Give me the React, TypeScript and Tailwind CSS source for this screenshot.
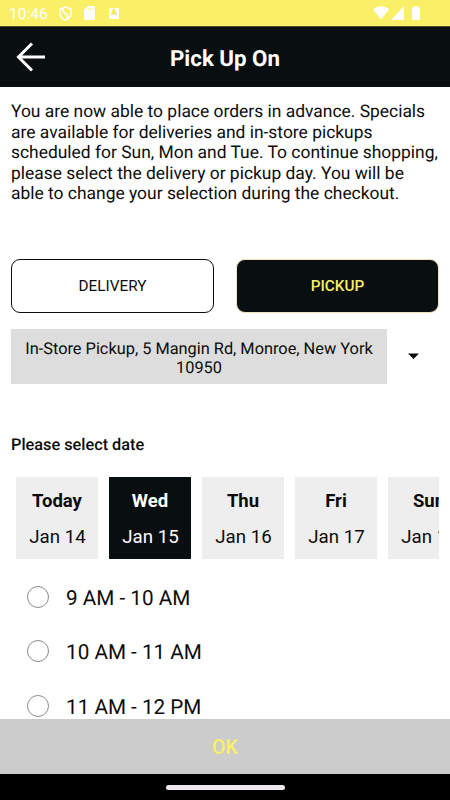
import { useState } from "react";

const dates = [
  { day: "Today", date: "Jan 14" },
  { day: "Wed", date: "Jan 15" },
  { day: "Thu", date: "Jan 16" },
  { day: "Fri", date: "Jan 17" },
  { day: "Sun", date: "Jan 19" },
];

const slots = ["9 AM - 10 AM", "10 AM - 11 AM", "11 AM - 12 PM"];

function StatusBar() {
  return (
    <div className="flex h-[26px] shrink-0 items-center bg-[#faf068] pl-[9px] pr-[30px] text-white">
      <span className="w-[50px] whitespace-nowrap pt-[2px] text-[15.500px] leading-[26px]">
        10:46
      </span>
      <svg className="h-[15px] w-[13px]" viewBox="0 0 13 15" fill="none" stroke="currentColor">
        <path d="M6.500 1 12 3v4.200c0 3.200-2.200 5.700-5.500 6.800C3.200 12.900 1 10.400 1 7.200V3z" strokeWidth="1.500" />
        <path d="M4 2.200C3.400 5 4.500 6.300 6.500 7.500S9 10.500 8.300 12.800" strokeWidth="1.700" />
      </svg>
      <svg className="ml-3 h-[14px] w-[11px]" viewBox="0 0 11 14">
        <path d="M4 0h6a1 1 0 0 1 1 1v12a1 1 0 0 1-1 1H1a1 1 0 0 1-1-1V4z" fill="currentColor" />
        <path d="M4.700 2v2M6.700 2v2M8.700 2v2" stroke="#faf068" strokeWidth="0.800" />
      </svg>
      <span className="ml-[14px] flex h-[11px] w-[10px] items-center justify-center rounded-[1px] bg-white text-[9px] font-bold leading-none text-[#f0df50]">
        A
      </span>
      <div className="ml-auto flex items-center">
        <svg className="h-[14px] w-[16px]" viewBox="0 0 16 14">
          <path d="M0 3.500C4.500-.8 11.500-.8 16 3.500L8 13.500z" fill="currentColor" />
        </svg>
        <svg className="ml-[2px] h-[14px] w-[13px]" viewBox="0 0 13 14">
          <path d="M13 0v14H0z" fill="currentColor" />
        </svg>
        <svg className="ml-[8px] h-[14px] w-[8px]" viewBox="0 0 8 14">
          <path d="M2.500 0h3v1.300H7a1 1 0 0 1 1 1V13a1 1 0 0 1-1 1H1a1 1 0 0 1-1-1V2.300a1 1 0 0 1 1-1h1.500z" fill="currentColor" />
        </svg>
      </div>
    </div>
  );
}

function Header() {
  return (
    <header className="grid h-[61px] shrink-0 grid-cols-[60px_1fr_60px] items-center border-t border-[#4d4b2a] bg-[#090e10] text-white">
      <button className="pl-4" aria-label="Back">
        <svg className="h-[30px] w-[30px]" viewBox="0 0 30 30" fill="none" stroke="currentColor" strokeWidth="3">
          <path d="M29 15H3M16 1.500 2.500 15 16 28.500" />
        </svg>
      </button>
      <h1 className="pt-[5px] text-center text-[22.300px] font-bold">Pick Up On</h1>
    </header>
  );
}

export default function App() {
  const [mode, setMode] = useState("PICKUP");
  const [selectedDate, setSelectedDate] = useState(1);
  const [selectedSlot, setSelectedSlot] = useState(-1);

  return (
    <div className="flex h-[800px] w-[450px] flex-col overflow-hidden bg-white font-['Roboto',sans-serif] text-[#0c0c0c] [text-rendering:geometricPrecision]">
      <StatusBar />
      <Header />
      <main className="min-h-0 flex-1 overflow-hidden px-[11px] pt-[15px]">
        <p className="whitespace-nowrap text-[17.430px] leading-[20.500px]">
          You are now able to place orders in advance. Specials
          <br />
          are available for deliveries and in-store pickups
          <br />
          scheduled for Sun, Mon and Tue. To continue shopping,
          <br />
          please select the delivery or pickup day. You will be
          <br />
          able to change your selection during the checkout.
        </p>

        <div className="mt-[54px] grid grid-cols-2 gap-[22px]">
          {["DELIVERY", "PICKUP"].map((name) => (
            <button
              key={name}
              onClick={() => setMode(name)}
              className={`h-[54px] rounded-[9px] border pt-px text-[15.300px] ${
                mode === name
                  ? "border-[#f4dfbd] bg-[#090e10] font-medium text-[#faf068]"
                  : "border-[#090e10] bg-white font-[450]"
              }`}
            >
              {name}
            </button>
          ))}
        </div>

        <div className="mt-[16px] flex items-center">
          <div className="h-[55px] w-[376px] bg-[#dddddd] pt-[10px] text-center text-[16.350px] leading-[19px]">
            In-Store Pickup, 5 Mangin Rd, Monroe, New York
            <br />
            10950
          </div>
          <svg className="ml-[21px] h-[6px] w-[11px]" viewBox="0 0 11 6">
            <path d="M0 .5h11L5.500 6z" fill="currentColor" />
          </svg>
        </div>

        <h2 className="mt-[51px] text-[16.300px] font-medium leading-5">Please select date</h2>

        <div className="mt-[22px] flex gap-[11px] overflow-hidden pl-[5px]">
          {dates.map((item, index) => (
            <button
              key={item.day}
              onClick={() => setSelectedDate(index)}
              className={`flex h-[82px] w-[82px] shrink-0 flex-col items-center pt-3 ${
                selectedDate === index ? "bg-[#090e10] text-white" : "bg-[#eeeeee]"
              }`}
            >
              <span className="text-[18.500px] font-bold leading-6">{item.day}</span>
              <span className="mt-3 pl-px text-[18.700px] leading-6">{item.date}</span>
            </button>
          ))}
        </div>

        <div className="mt-[11px] pl-4">
          {slots.map((slot, index) => (
            <label key={slot} className="flex h-[54.500px] items-center text-[20.700px]">
              <input
                type="radio"
                name="slot"
                className="h-[22px] w-[22px] appearance-none rounded-full border-[1.500px] border-[#8c8c8c] checked:border-[7px] checked:border-[#090e10]"
                checked={selectedSlot === index}
                onChange={() => setSelectedSlot(index)}
              />
              <span className="ml-[17px] pt-[5px]">{slot}</span>
            </label>
          ))}
        </div>
      </main>
      <button className="h-[55px] shrink-0 bg-[#cccccc] pt-[3px] text-[19.500px] font-medium text-[#faf068]">OK</button>
      <div className="flex h-[26px] shrink-0 items-center justify-center bg-black">
        <div className="h-[5px] w-[119px] rounded-full bg-[#eee8ee]" />
      </div>
    </div>
  );
}
